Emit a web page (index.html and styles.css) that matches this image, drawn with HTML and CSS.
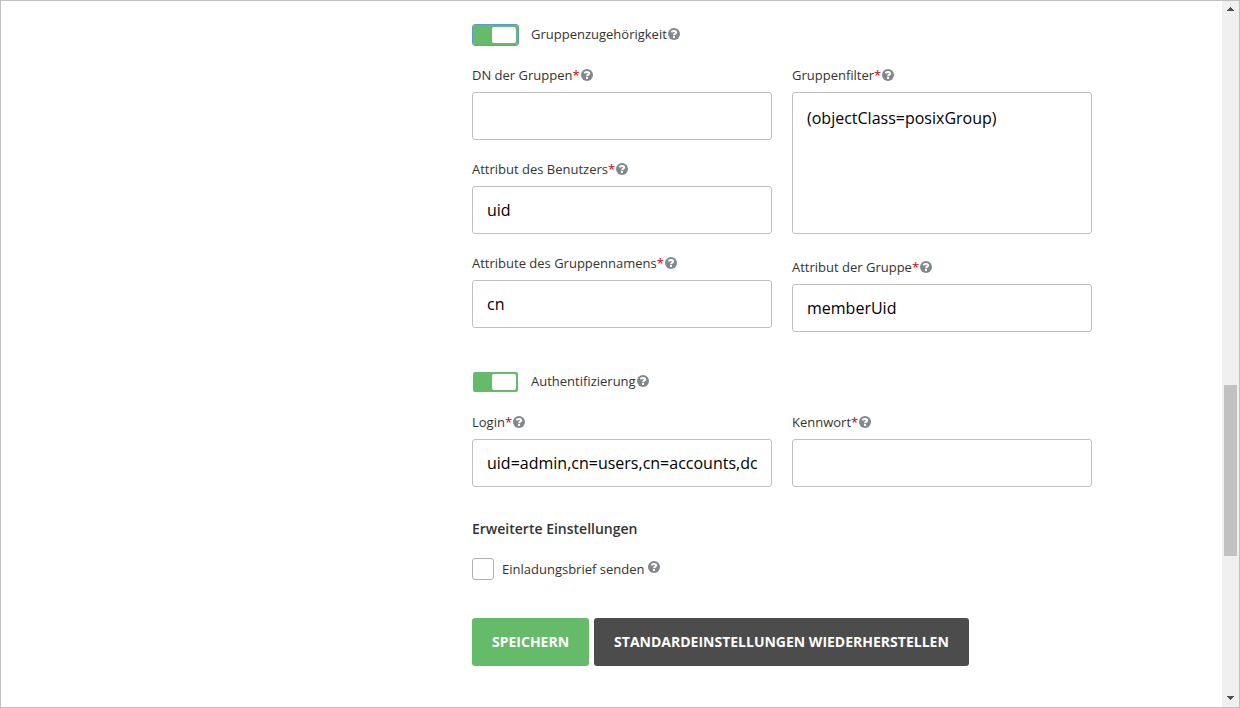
FILE: index.html
```html
<!DOCTYPE html>
<html lang="de">
<head>
    <meta charset="utf-8">
    <title>LDAP-Einstellungen</title>
    <link rel="stylesheet" href="styles.css">
</head>
<body>
    <svg class="sprite" aria-hidden="true">
        <symbol id="icon-help" viewBox="0 0 12 12">
            <circle cx="6" cy="6" r="6" fill="#83888d"/>
            <path d="M3.800 4.400C3.900 3.300 4.700 2.900 6 2.900c1.400 0 2.200.5 2.200 1.500C8.200 5.700 6.100 5.500 6.100 7.200" fill="none" stroke="#fff" stroke-width="2"/>
            <rect x="5" y="8" width="2" height="2" fill="#fff"/>
        </symbol>
    </svg>

    <div class="window">
        <main class="content">
            <form class="settings-form">
                <div class="switch-row">
                    <input type="checkbox" class="switch switch-focused" id="group-membership" checked>
                    <label for="group-membership">Gruppenzugehörigkeit</label>
                    <button type="button" class="help" aria-label="Hilfe"><svg><use href="#icon-help"/></svg></button>
                </div>

                <div class="columns">
                    <div class="column">
                        <div class="field">
                            <div class="field-title">
                                <label for="group-dn">DN der Gruppen<span class="required">*</span></label>
                                <button type="button" class="help" aria-label="Hilfe"><svg><use href="#icon-help"/></svg></button>
                            </div>
                            <input type="text" class="text-box" id="group-dn">
                        </div>
                        <div class="field">
                            <div class="field-title">
                                <label for="user-attribute">Attribut des Benutzers<span class="required">*</span></label>
                                <button type="button" class="help" aria-label="Hilfe"><svg><use href="#icon-help"/></svg></button>
                            </div>
                            <input type="text" class="text-box" id="user-attribute" value="uid">
                        </div>
                        <div class="field">
                            <div class="field-title">
                                <label for="group-name-attribute">Attribute des Gruppennamens<span class="required">*</span></label>
                                <button type="button" class="help" aria-label="Hilfe"><svg><use href="#icon-help"/></svg></button>
                            </div>
                            <input type="text" class="text-box" id="group-name-attribute" value="cn">
                        </div>
                    </div>
                    <div class="column">
                        <div class="field">
                            <div class="field-title">
                                <label for="group-filter">Gruppenfilter<span class="required">*</span></label>
                                <button type="button" class="help" aria-label="Hilfe"><svg><use href="#icon-help"/></svg></button>
                            </div>
                            <textarea class="text-box text-area" id="group-filter">(objectClass=posixGroup)</textarea>
                        </div>
                        <div class="field">
                            <div class="field-title">
                                <label for="group-attribute">Attribut der Gruppe<span class="required">*</span></label>
                                <button type="button" class="help" aria-label="Hilfe"><svg><use href="#icon-help"/></svg></button>
                            </div>
                            <input type="text" class="text-box" id="group-attribute" value="memberUid">
                        </div>
                    </div>
                </div>

                <div class="switch-row section">
                    <input type="checkbox" class="switch" id="authentication" checked>
                    <label for="authentication">Authentifizierung</label>
                    <button type="button" class="help" aria-label="Hilfe"><svg><use href="#icon-help"/></svg></button>
                </div>

                <div class="columns">
                    <div class="field">
                        <div class="field-title">
                            <label for="login">Login<span class="required">*</span></label>
                            <button type="button" class="help" aria-label="Hilfe"><svg><use href="#icon-help"/></svg></button>
                        </div>
                        <input type="text" class="text-box" id="login" value="uid=admin,cn=users,cn=accounts,dc">
                    </div>
                    <div class="field">
                        <div class="field-title">
                            <label for="password">Kennwort<span class="required">*</span></label>
                            <button type="button" class="help" aria-label="Hilfe"><svg><use href="#icon-help"/></svg></button>
                        </div>
                        <input type="password" class="text-box" id="password">
                    </div>
                </div>

                <h2 class="subtitle">Erweiterte Einstellungen</h2>
                <div class="check-row">
                    <input type="checkbox" class="check-box" id="send-letter">
                    <label for="send-letter">Einladungsbrief senden</label>
                    <button type="button" class="help" aria-label="Hilfe"><svg><use href="#icon-help"/></svg></button>
                </div>

                <div class="buttons">
                    <button type="submit" class="button button-save">Speichern</button>
                    <button type="button" class="button button-restore">Standardeinstellungen wiederherstellen</button>
                </div>
            </form>
        </main>

        <div class="scrollbar" aria-hidden="true">
            <svg class="scroll-arrow" viewBox="0 0 17 17"><path d="M8 6h1v1h1v1h1v1h1v1H5V9h1V8h1V7h1z" fill="#505050"/></svg>
            <div class="scroll-before"></div>
            <div class="scroll-thumb"></div>
            <div class="scroll-after"></div>
            <svg class="scroll-arrow" viewBox="0 0 17 17"><path d="M5 6h7v1h-1v1h-1v1H9v1H8V9H7V8H6V7H5z" fill="#505050"/></svg>
        </div>
    </div>
</body>
</html>
```
FILE: styles.css
```css
* {
    box-sizing: border-box;
}

body {
    margin: 0;
    font-family: "Open Sans", Arial, sans-serif;
    font-size: 13px;
    line-height: 18px;
    color: #333;
    background: #fff;
}

.sprite {
    display: none;
}

.window {
    display: flex;
    min-height: 100vh;
    border: 1px solid #c0c0c0;
}

.content {
    flex: 1;
    display: grid;
    grid-template-columns: minmax(0, 471px) minmax(0, 620px);
    padding: 23px 0 40px;
}

.settings-form {
    grid-column: 2;
}

/* switches */
.switch-row {
    display: flex;
    align-items: flex-start;
    margin-bottom: 20px;
    line-height: 20px;
}

.switch-row .help {
    margin-top: 4px;
}

.section {
    margin-top: 39px;
}

.switch {
    display: flex;
    justify-content: flex-end;
    appearance: none;
    width: 47px;
    height: 22px;
    margin: 0 12px 0 0;
    padding: 2px;
    border: 1px solid transparent;
    border-radius: 3px;
    background: #66bb6a padding-box;
    cursor: pointer;
}

.switch::before {
    content: "";
    width: 24px;
    height: 16px;
    border-radius: 2px;
    background: #fff;
}

.switch:not(:checked) {
    justify-content: flex-start;
    background-color: #c0c0c0;
}

.switch-focused {
    border-color: #5c97d8;
}

.help {
    width: 12px;
    height: 12px;
    margin-left: 1px;
    padding: 0;
    border: 0;
    background: none;
    cursor: pointer;
}

.help svg {
    display: block;
    width: 12px;
    height: 12px;
}

/* fields */
.columns {
    display: grid;
    grid-template-columns: 1fr 1fr;
    gap: 20px;
}

.column {
    display: flex;
    flex-direction: column;
    gap: 20px;
}

.field-title {
    display: flex;
    align-items: center;
    margin-bottom: 8px;
}

.required {
    color: #c00;
}

.text-box {
    display: block;
    width: 100%;
    height: 48px;
    padding: 0 14px;
    border: 1px solid #bfbfbf;
    border-radius: 3px;
    font-family: inherit;
    font-size: 16px;
    color: #000;
    background: #fff;
}

.text-area {
    height: 142px;
    margin-bottom: 4px;
    padding: 14px;
    line-height: 22px;
    resize: none;
}

.subtitle {
    margin: 32px 0 19px;
    font-size: 14px;
    line-height: 20px;
    font-weight: 600;
}

.check-row {
    display: flex;
    align-items: center;
}

.check-box {
    appearance: none;
    width: 22px;
    height: 22px;
    margin: 0 8px 0 0;
    border: 1px solid #b0b0b0;
    border-radius: 3px;
}

.check-box:checked {
    background: #66bb6a;
}

.check-row .help {
    margin: 0 0 4px 4px;
}

/* buttons */
.buttons {
    display: flex;
    flex-wrap: wrap;
    gap: 5px;
    margin-top: 38px;
}

.button {
    min-height: 48px;
    padding: 0 20px 2px;
    border: 0;
    border-radius: 3px;
    font-family: inherit;
    font-size: 14px;
    font-weight: 700;
    text-transform: uppercase;
    color: #fff;
    cursor: pointer;
}

.button-save {
    background: #66bb6a;
}

.button-restore {
    background: #4c4c4c;
}

/* scrollbar */
.scrollbar {
    display: flex;
    flex-direction: column;
    width: 17px;
    background: #f0f0f0;
}

.scroll-arrow {
    width: 17px;
    height: 17px;
}

.scroll-before {
    flex: 367;
}

.scroll-thumb {
    flex: 171;
    margin: 0 2px;
    background: #c1c1c1;
}

.scroll-after {
    flex: 134;
}
```
